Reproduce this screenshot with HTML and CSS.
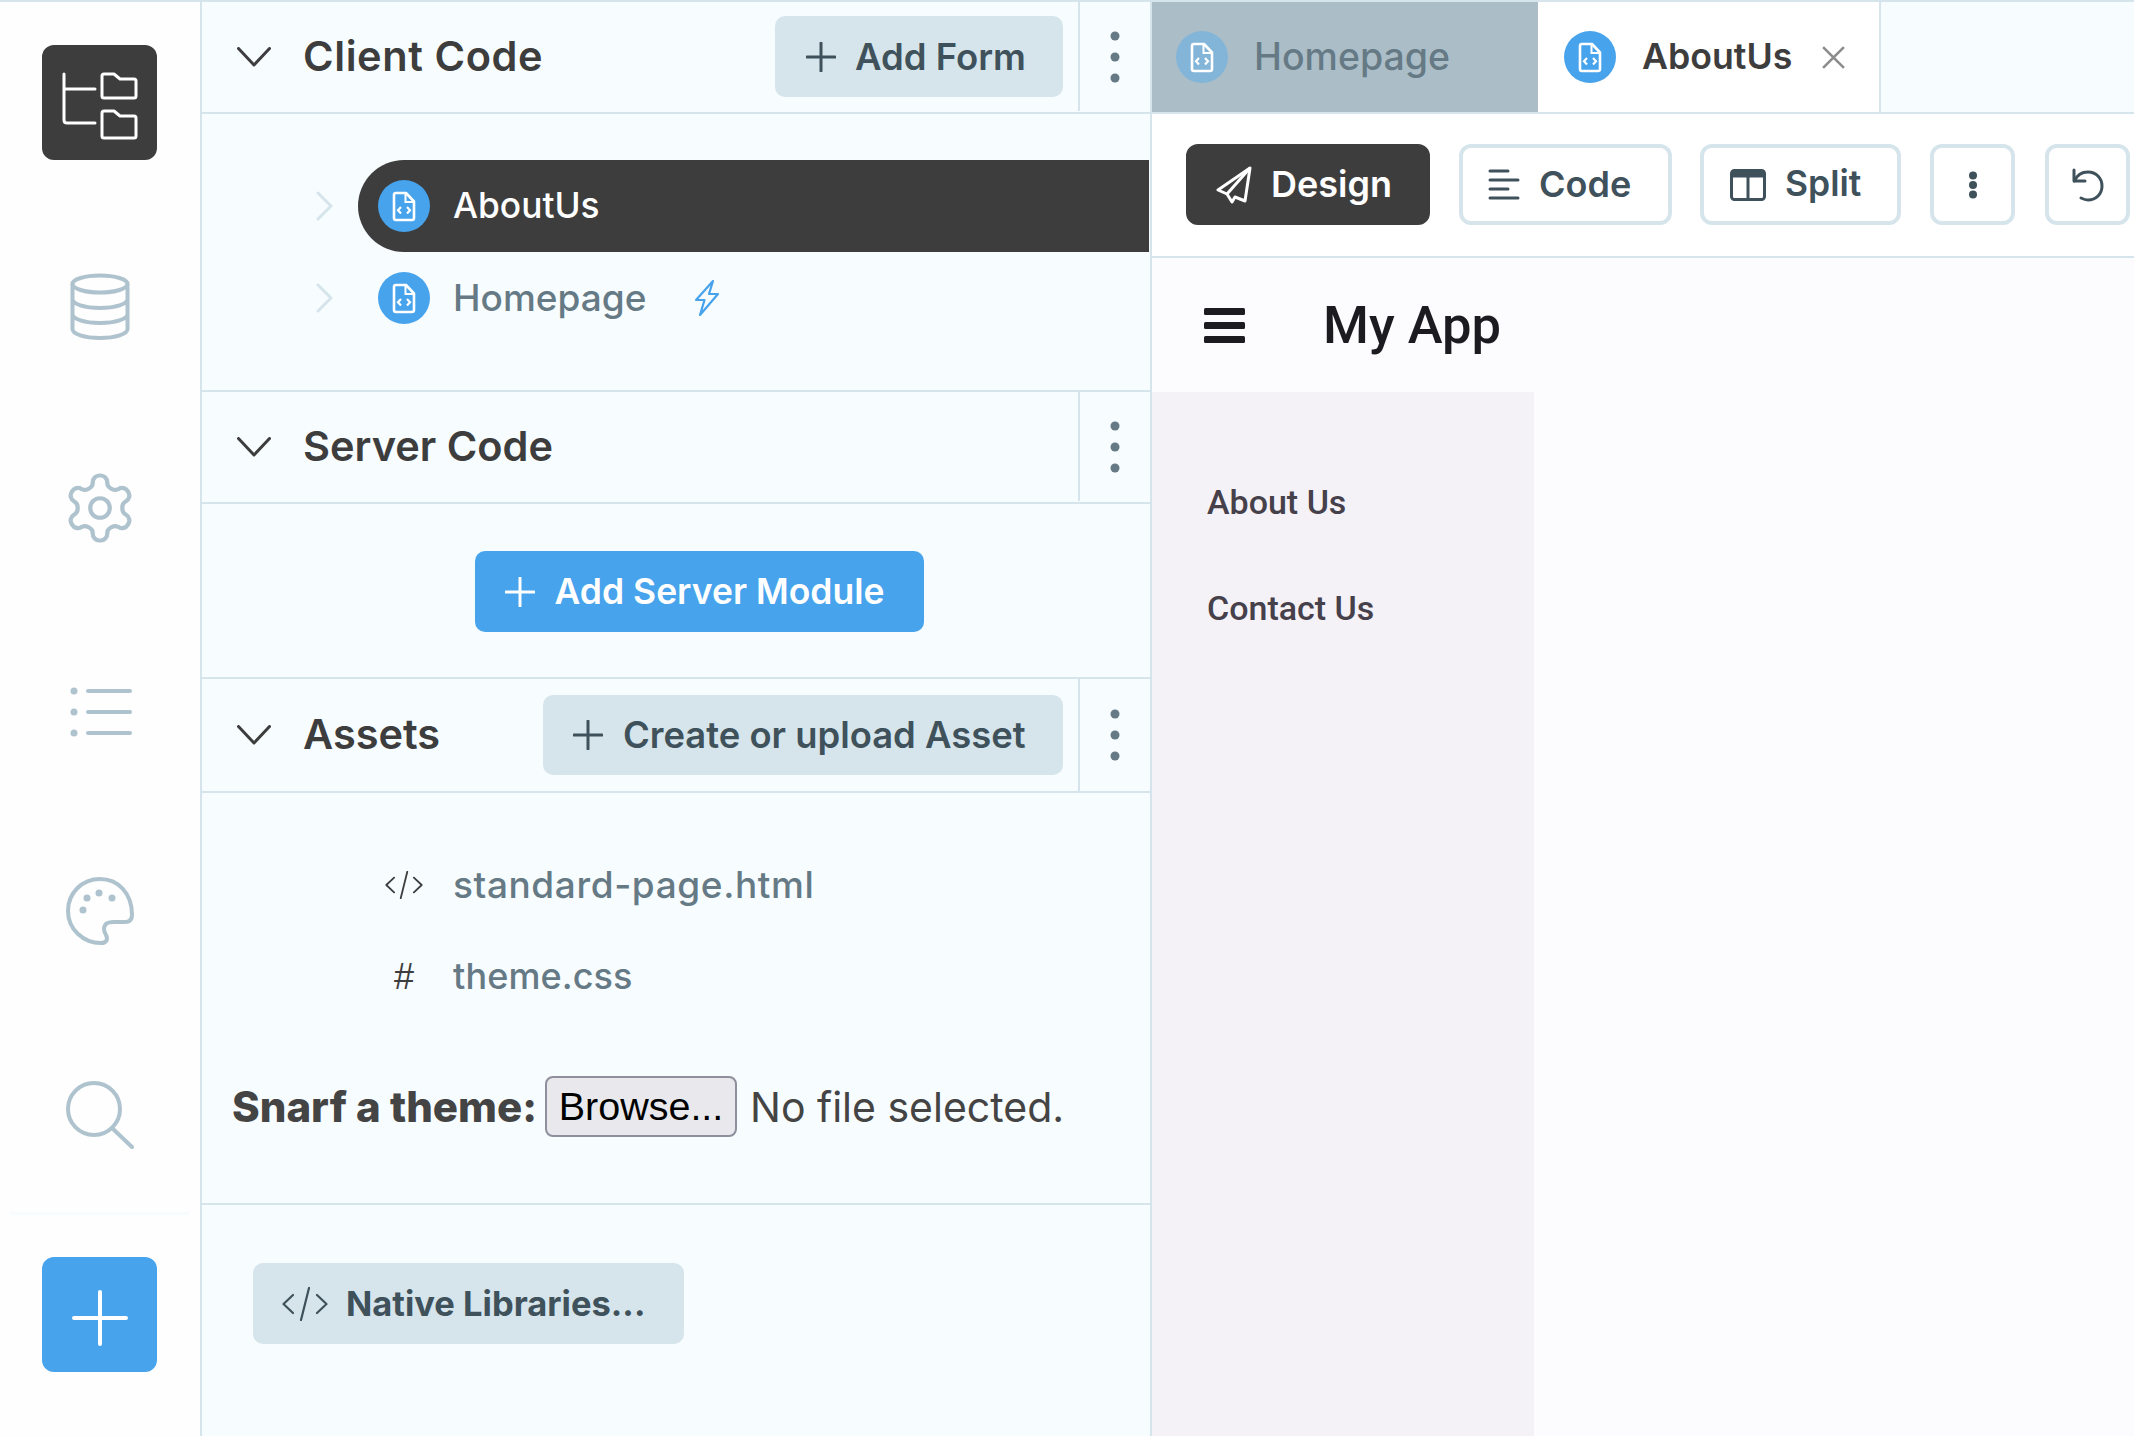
FILE: index.html
```html
<!DOCTYPE html>
<html lang="en">
<head>
<meta charset="utf-8">
<title>App Builder</title>
<link rel="stylesheet" href="styles.css">
</head>
<body>
<svg class="defs" width="0" height="0">
  <symbol id="file" viewBox="0 0 52 52">
    <circle cx="26" cy="26" r="26" fill="currentColor"/>
    <path d="M16 15q0-2 2-2h10l8 8.500V38q0 2-2 2H18q-2 0-2-2z" fill="none" stroke="#fff" stroke-width="2.600" stroke-linejoin="round"/>
    <path d="M27.500 14v8h8" fill="none" stroke="#fff" stroke-width="2"/>
    <path d="M23 27l-3 3.200 3 3.200M29 27l3 3.200-3 3.200" fill="none" stroke="#fff" stroke-width="2.200"/>
  </symbol>
  <symbol id="chev-down" viewBox="0 0 34 20"><path d="M1.500 1.500L17 18 32.500 1.500" fill="none" stroke="currentColor" stroke-width="3" stroke-linecap="round" stroke-linejoin="round"/></symbol>
  <symbol id="chev-right" viewBox="0 0 18 30"><path d="M2 2l13 13L2 28" fill="none" stroke="currentColor" stroke-width="3" stroke-linecap="round" stroke-linejoin="round"/></symbol>
  <symbol id="plus" viewBox="0 0 30 30"><path d="M15 1v28M1 15h28" fill="none" stroke="currentColor" stroke-width="3" stroke-linecap="round"/></symbol>
  <symbol id="kebab" viewBox="0 0 10 52"><circle cx="5" cy="5" r="4.500" fill="currentColor"/><circle cx="5" cy="26" r="4.500" fill="currentColor"/><circle cx="5" cy="47" r="4.500" fill="currentColor"/></symbol>
  <symbol id="kebab-small" viewBox="0 0 10 28"><circle cx="5" cy="4.500" r="4" fill="currentColor"/><circle cx="5" cy="14" r="4" fill="currentColor"/><circle cx="5" cy="23.500" r="4" fill="currentColor"/></symbol>
  <symbol id="codetag" viewBox="0 0 46 34"><path d="M11 8L1.500 17 11 26M35 8l9.500 9L35 26M27 1l-8 32" fill="none" stroke="currentColor" stroke-width="2.200" stroke-linecap="round" stroke-linejoin="round"/></symbol>
</svg>

<div class="app">
  <nav class="rail">
    <a class="rail-item"><span class="rail-btn rail-btn-dark">
      <svg class="ico-tree" viewBox="0 0 76 68" fill="none" stroke="#fff" stroke-width="3" stroke-linecap="round" stroke-linejoin="round"><path d="M2 2v46q0 3 3 3h28M2 17h31"/><path d="M40 4q0-2 2-2h10l6 5h14q2 0 2 2v15q0 2-2 2H42q-2 0-2-2z"/><path d="M40 41q0-2 2-2h10l6 5h14q2 0 2 2v18q0 2-2 2H42q-2 0-2-2z"/></svg>
    </span></a>
    <a class="rail-item">
      <svg class="ico-db" viewBox="0 0 60 68" fill="none" stroke="currentColor" stroke-width="4"><ellipse cx="30" cy="11" rx="27.500" ry="8.500"/><path d="M2.500 11v45c0 5 12 9 27.500 9s27.500-4 27.500-9V11M2.500 26c0 5 12 9 27.500 9s27.500-4 27.500-9M2.500 41c0 5 12 9 27.500 9s27.500-4 27.500-9"/></svg>
    </a>
    <a class="rail-item">
      <svg class="ico-gear" viewBox="0 0 24 24" fill="none" stroke="currentColor" stroke-width="1.300" stroke-linecap="round" stroke-linejoin="round"><path d="M12.220 2h-.44a2 2 0 0 0-2 2v.18a2 2 0 0 1-1 1.730l-.43.250a2 2 0 0 1-2 0l-.15-.08a2 2 0 0 0-2.730.730l-.22.380a2 2 0 0 0 .730 2.730l.150.100a2 2 0 0 1 1 1.720v.510a2 2 0 0 1-1 1.740l-.15.090a2 2 0 0 0-.730 2.730l.220.380a2 2 0 0 0 2.730.730l.150-.08a2 2 0 0 1 2 0l.430.250a2 2 0 0 1 1 1.730V20a2 2 0 0 0 2 2h.440a2 2 0 0 0 2-2v-.18a2 2 0 0 1 1-1.730l.430-.25a2 2 0 0 1 2 0l.150.080a2 2 0 0 0 2.730-.73l.220-.39a2 2 0 0 0-.73-2.730l-.15-.08a2 2 0 0 1-1-1.740v-.5a2 2 0 0 1 1-1.740l.150-.09a2 2 0 0 0 .730-2.730l-.22-.38a2 2 0 0 0-2.730-.73l-.15.080a2 2 0 0 1-2 0l-.43-.25a2 2 0 0 1-1-1.730V4a2 2 0 0 0-2-2z"/><circle cx="12" cy="12" r="3"/></svg>
    </a>
    <a class="rail-item">
      <svg class="ico-list" viewBox="0 0 62 50" fill="none" stroke="currentColor" stroke-width="4" stroke-linecap="round"><circle cx="4" cy="4" r="3.500" fill="currentColor" stroke="none"/><circle cx="4" cy="25" r="3.500" fill="currentColor" stroke="none"/><circle cx="4" cy="46" r="3.500" fill="currentColor" stroke="none"/><path d="M18 4h42M18 25h42M18 46h42"/></svg>
    </a>
    <a class="rail-item">
      <svg class="ico-palette" viewBox="0 0 68 68" fill="none" stroke="currentColor" stroke-width="4" stroke-linecap="round" stroke-linejoin="round"><path d="M34 2C16 2 2 16 2 34s15 32 33 32c6 0 7-4 5-8-3-5-3-8 0-11 2-2 5-2 8-2h11c5 0 7-3 7-7C66 16 52 2 34 2z"/><circle cx="21" cy="21" r="3.500" fill="currentColor" stroke="none"/><circle cx="33" cy="16" r="3.500" fill="currentColor" stroke="none"/><circle cx="46" cy="21" r="3.500" fill="currentColor" stroke="none"/><circle cx="17" cy="33" r="3.500" fill="currentColor" stroke="none"/></svg>
    </a>
    <a class="rail-item">
      <svg class="ico-search" viewBox="0 0 68 68" fill="none" stroke="currentColor" stroke-width="4" stroke-linecap="round"><circle cx="28" cy="28" r="26"/><path d="M46 47l20 19"/></svg>
    </a>
    <div class="rail-bottom"><span class="rail-btn rail-btn-blue"><svg class="ico-bigplus" viewBox="0 0 56 56"><path d="M28 2v52M2 28h52" fill="none" stroke="currentColor" stroke-width="4" stroke-linecap="round"/></svg></span></div>
  </nav>

  <section class="explorer">
    <header class="sec-head">
      <svg class="chev"><use href="#chev-down"/></svg>
      <h2 class="sec-title sec-title-client">Client Code</h2>
      <button class="btn btn-soft btn-addform"><svg class="btn-plus"><use href="#plus"/></svg>Add Form</button>
      <span class="kebab-cell"><svg class="kebab"><use href="#kebab"/></svg></span>
    </header>
    <div class="forms">
      <div class="form-row form-row-active">
        <svg class="tw"><use href="#chev-right"/></svg>
        <div class="pill"><svg class="file"><use href="#file"/></svg><span class="row-label label-about">AboutUs</span></div>
      </div>
      <div class="form-row">
        <svg class="tw"><use href="#chev-right"/></svg>
        <div class="pill"><svg class="file"><use href="#file"/></svg><span class="row-label label-home">Homepage</span>
          <svg class="bolt" viewBox="0 0 28 38" fill="none" stroke="currentColor" stroke-width="2.200" stroke-linejoin="round"><path d="M20 2L3 21h8.500L7 36l18-21h-9z"/></svg>
        </div>
      </div>
    </div>

    <header class="sec-head">
      <svg class="chev"><use href="#chev-down"/></svg>
      <h2 class="sec-title">Server Code</h2>
      <span class="kebab-cell kebab-cell-solo"><svg class="kebab"><use href="#kebab"/></svg></span>
    </header>
    <div class="server">
      <button class="btn btn-primary"><svg class="btn-plus"><use href="#plus"/></svg>Add Server Module</button>
    </div>

    <header class="sec-head sec-head-tall">
      <svg class="chev"><use href="#chev-down"/></svg>
      <h2 class="sec-title">Assets</h2>
      <button class="btn btn-soft btn-asset"><svg class="btn-plus"><use href="#plus"/></svg>Create or upload Asset</button>
      <span class="kebab-cell"><svg class="kebab"><use href="#kebab"/></svg></span>
    </header>
    <div class="assets">
      <div class="asset-row"><svg class="asset-ico"><use href="#codetag"/></svg><span class="row-label label-html">standard-page.html</span></div>
      <div class="asset-row"><span class="asset-hash">#</span><span class="row-label label-css">theme.css</span></div>
      <div class="snarf">
        <strong class="snarf-label">Snarf a theme:</strong>
        <button class="browse">Browse...</button>
        <span class="nofile">No file selected.</span>
      </div>
    </div>
    <div class="native">
      <button class="btn btn-soft btn-native"><svg class="native-ico"><use href="#codetag"/></svg>Native Libraries...</button>
    </div>
  </section>

  <main class="editor">
    <div class="tabs">
      <div class="tab tab-off"><svg class="file"><use href="#file"/></svg><span class="tab-label">Homepage</span></div>
      <div class="tab tab-on"><svg class="file"><use href="#file"/></svg><span class="tab-label">AboutUs</span>
        <svg class="tab-x" viewBox="0 0 24 22" fill="none" stroke="currentColor" stroke-width="2.500"><path d="M2 1l20 20M22 1L2 21"/></svg>
      </div>
    </div>
    <div class="toolbar">
      <button class="tool tool-on tool-design">
        <svg class="ico-plane" viewBox="0 0 36 38" fill="none" stroke="currentColor" stroke-width="3" stroke-linejoin="round"><path d="M34 2L2 24l9 4 5 8 3-5 10 4z"/><path d="M34 2L11 28"/></svg><span class="tool-text">Design</span></button>
      <button class="tool tool-code">
        <svg class="ico-lines" viewBox="0 0 32 32" fill="none" stroke="currentColor" stroke-width="3" stroke-linecap="round"><path d="M2 2h18M2 11h28M2 20h18M2 29h28"/></svg><span class="tool-text">Code</span></button>
      <button class="tool tool-split">
        <svg class="ico-split" viewBox="0 0 36 32" fill="none"><rect x="1.500" y="1.500" width="33" height="29" rx="3" stroke="currentColor" stroke-width="3"/><rect x="1.500" y="1.500" width="33" height="7" fill="currentColor"/><path d="M18 8v22" stroke="currentColor" stroke-width="3"/></svg><span class="tool-text">Split</span></button>
      <button class="tool tool-icon"><svg class="tool-kebab"><use href="#kebab-small"/></svg></button>
      <button class="tool tool-icon tool-undo">
        <svg class="ico-undo" viewBox="0 0 32 34" fill="none" stroke="currentColor" stroke-width="3" stroke-linecap="round" stroke-linejoin="round"><path d="M2 2v11h11"/><path d="M2.500 13C5 7 10 4 16 4c8 0 14 6 14 14s-6 14-14 14c-3 0-5-1-7-2"/></svg></button>
    </div>
    <div class="preview">
      <div class="app-bar">
        <svg class="burger" viewBox="0 0 41 35" fill="currentColor"><rect width="41" height="7" y="0" rx="1.500"/><rect width="41" height="7" y="14" rx="1.500"/><rect width="41" height="7" y="28" rx="1.500"/></svg>
        <span class="app-title">My App</span>
      </div>
      <aside class="app-nav">
        <a class="app-link">About Us</a>
        <a class="app-link">Contact Us</a>
      </aside>
    </div>
  </main>
</div>
</body>
</html>
```

FILE: styles.css
```css
* { box-sizing: border-box; }
html, body { margin: 0; padding: 0; height: 100%; overflow: hidden; background: #fff; }
body { font-family: "Inter", "Liberation Sans", sans-serif; color: #3d3d3d; }
.defs { position: absolute; }
button { font-family: inherit; cursor: pointer; }
h2 { margin: 0; }

.app { display: flex; width: 2134px; height: 1436px; border-top: 2px solid #d5e5eb; }

/* left rail */
.rail { flex: 0 0 202px; display: flex; flex-direction: column; background: #fefefe; border-right: 2px solid #d5e5eb; color: #aec3ce; }
.rail-item { flex: 0 0 201.670px; display: flex; align-items: center; justify-content: center; padding-right: 1px; }
.rail-bottom { margin: 0 11px 0 10px; border-top: 3px solid #f7fcff; padding: 42px 0 0; display: flex; justify-content: center; }
.rail-btn { width: 115px; height: 115px; border-radius: 12px; display: flex; align-items: center; justify-content: center; flex: none; }
.rail-btn-dark { background: #3d3d3d; }
.rail-btn-blue { background: #47a3ec; color: #fff; }
.ico-tree { width: 76px; height: 68px; margin-top: 6px; }
.ico-db { width: 60px; height: 68px; margin-top: 6px; }
.ico-gear { width: 78px; height: 78px; margin-top: 4px; }
.ico-list { width: 62px; height: 50px; margin: 8px 0 0 2px; }
.ico-palette { width: 68px; height: 68px; margin-top: 3px; }
.ico-search { width: 68px; height: 68px; margin-top: 7px; }
.ico-bigplus { width: 56px; height: 56px; margin-top: 7px; }

/* explorer */
.explorer { flex: 0 0 950px; background: #f7fcff; border-right: 2px solid #d5e5eb; display: flex; flex-direction: column; }
.sec-head { flex: 0 0 auto; height: 112px; border-bottom: 2px solid #d5e5eb; display: flex; align-items: center; padding: 0 0 1px 35px; color: #3d3d3d; }
.sec-head-tall { height: 114px; padding-bottom: 0; }
.chev { width: 34px; height: 20px; flex: none; }
.sec-title { margin: 0 0 2px 32px; font-size: 41.500px; font-weight: 600; white-space: nowrap; }
.sec-title-client { letter-spacing: .6px; }
.kebab-cell { flex: 0 0 72px; height: 100%; margin-left: 15px; border-left: 2px solid #d5e5eb; display: flex; align-items: center; justify-content: center; color: #657a85; }
.kebab-cell-solo { margin-left: auto; }
.kebab { width: 10px; height: 52px; }

.btn { border: 0; border-radius: 10px; height: 81px; display: inline-flex; align-items: center; font-size: 36px; font-weight: 600; white-space: nowrap; padding-bottom: 1px; }
.btn-soft { background: #d5e5eb; color: #3f515b; margin-left: auto; }
.btn-primary { background: #47a3ec; color: #fff; padding-left: 30px; padding-right: 0; width: 449px; font-size: 35.500px; }
.btn-plus { width: 30px; height: 30px; margin-right: 20px; flex: none; }
.btn-addform { padding-left: 31px; padding-right: 0; width: 288px; font-size: 36.500px; }
.btn-addform .btn-plus { margin-right: 19px; }
.btn-asset { padding-left: 30px; padding-right: 0; width: 520px; height: 80px; font-size: 36.400px; }

.forms { flex: 0 0 auto; height: 278px; padding: 46px 0; border-bottom: 2px solid #d5e5eb; }
.form-row { height: 92px; display: flex; align-items: center; padding-left: 114px; }
.tw { width: 18px; height: 30px; color: #d5e5eb; flex: none; }
.pill { flex: 1; height: 92px; margin-left: 24px; margin-right: 1px; border-radius: 46px 0 0 46px; padding-left: 20px; display: flex; align-items: center; color: #657a85; }
.form-row-active .pill { background: #3d3d3d; color: #fff; }
.file { width: 52px; height: 52px; color: #47a3ec; flex: none; }
.row-label { margin-left: 23px; padding-bottom: 2px; font-weight: 500; color: inherit; white-space: nowrap; }
.label-about { font-size: 35.300px; }
.label-home { font-size: 37px; }
.bolt { width: 28px; height: 38px; margin-left: 47px; color: #47a3ec; flex: none; }

.server { flex: 0 0 auto; height: 175px; border-bottom: 2px solid #d5e5eb; display: flex; justify-content: center; padding-top: 47px; align-items: flex-start; padding-left: 46px; }

.assets { flex: 0 0 auto; height: 412px; padding-top: 46px; border-bottom: 2px solid #d5e5eb; }
.asset-row { height: 92px; display: flex; align-items: center; padding-left: 183px; color: #657a85; }
.asset-ico { width: 38px; height: 28px; color: #3d3d3d; flex: none; }
.asset-hash { width: 38px; text-align: center; font-size: 36px; color: #3d3d3d; flex: none; font-family: "Liberation Sans", sans-serif; }
.asset-row .row-label { margin-left: 30px; }
.label-html { font-size: 37px; letter-spacing: .6px; }
.label-css { font-size: 36px; letter-spacing: .1px; }
.snarf { display: flex; align-items: center; margin-top: 53px; padding-left: 30px; }
.snarf-label { font-size: 42px; font-weight: 800; color: #444; white-space: nowrap; width: 313px; }
.browse { flex: none; width: 192px; height: 61px; padding: 0; border: 2px solid #8f8f9d; border-radius: 8px; background: #e9e9ed; color: #000; font-family: "Liberation Sans", sans-serif; font-size: 39.500px; }
.nofile { margin-left: 13px; font-size: 41px; color: #444; white-space: nowrap; }

.native { padding: 58px 0 0 51px; }
.btn-native { width: 431px; padding-left: 29px; margin: 0; font-size: 34.500px; font-weight: 700; }
.native-ico { width: 46px; height: 34px; margin-right: 18px; flex: none; }

/* editor */
.editor { flex: 1; min-width: 0; display: flex; flex-direction: column; background: #fff; }
.tabs { flex: 0 0 112px; display: flex; background: #f7fcff; border-bottom: 2px solid #d5e5eb; }
.tab { display: flex; align-items: center; font-size: 36px; font-weight: 500; height: 110px; }
.tab-off { width: 386px; background: #abbec8; padding-left: 24px; color: #657a85; }
.tab-off .file { color: #82b5d8; }
.tab-off .tab-label { font-size: 37.500px; }
.tab-on { width: 343px; padding-left: 26px; background: #fff; color: #3d3d3d; border-right: 2px solid #d5e5eb; font-weight: 600; font-size: 35.700px; }
.tab-label { margin-left: 26px; padding-bottom: 2px; white-space: nowrap; }
.tab-x { width: 25px; height: 23px; margin-left: 29px; color: #8c8c8c; flex: none; }

.toolbar { flex: 0 0 144px; display: flex; align-items: center; padding: 0 0 1px 34px; border-bottom: 2px solid #d5e5eb; gap: 29px; }
.tool { height: 81px; border: 4px solid #d5e5eb; border-radius: 12px; background: #fff; color: #3f515b; font-size: 36px; font-weight: 600; display: flex; align-items: center; padding: 0; white-space: nowrap; }
.tool-text { padding-bottom: 2px; }
.tool-on { background: #3d3d3d; border-color: #3d3d3d; color: #fff; }
.tool-design { width: 244px; padding-left: 26px; }
.tool-code { width: 213px; padding-left: 25px; }
.tool-split { width: 201px; padding-left: 26px; margin-left: -1px; font-size: 35.500px; }
.tool-icon { width: 85px; justify-content: center; }
.tool-undo { margin-left: 1px; }
.ico-plane { width: 36px; height: 38px; margin-right: 19px; flex: none; }
.ico-lines { width: 32px; height: 32px; margin-right: 19px; flex: none; }
.ico-split { width: 36px; height: 32px; margin-right: 19px; flex: none; }
.tool-kebab { width: 10px; height: 28px; }
.ico-undo { width: 32px; height: 34px; }

.preview { flex: 1; background: #fcfbfe; display: flex; flex-direction: column; font-family: "Roboto", sans-serif; }
.app-bar { flex: 0 0 134px; display: flex; align-items: center; padding: 0 0 0 52px; color: #1c1b1f; }
.burger { width: 41px; height: 35px; flex: none; }
.app-title { margin-left: 78px; font-size: 52.500px; font-weight: 500; }
.app-nav { flex: 1; width: 382px; background: #f4f1f7; padding-top: 57px; }
.app-link { display: flex; align-items: center; height: 106px; padding-left: 55px; font-size: 34px; font-weight: 500; color: #45404a; }
```
